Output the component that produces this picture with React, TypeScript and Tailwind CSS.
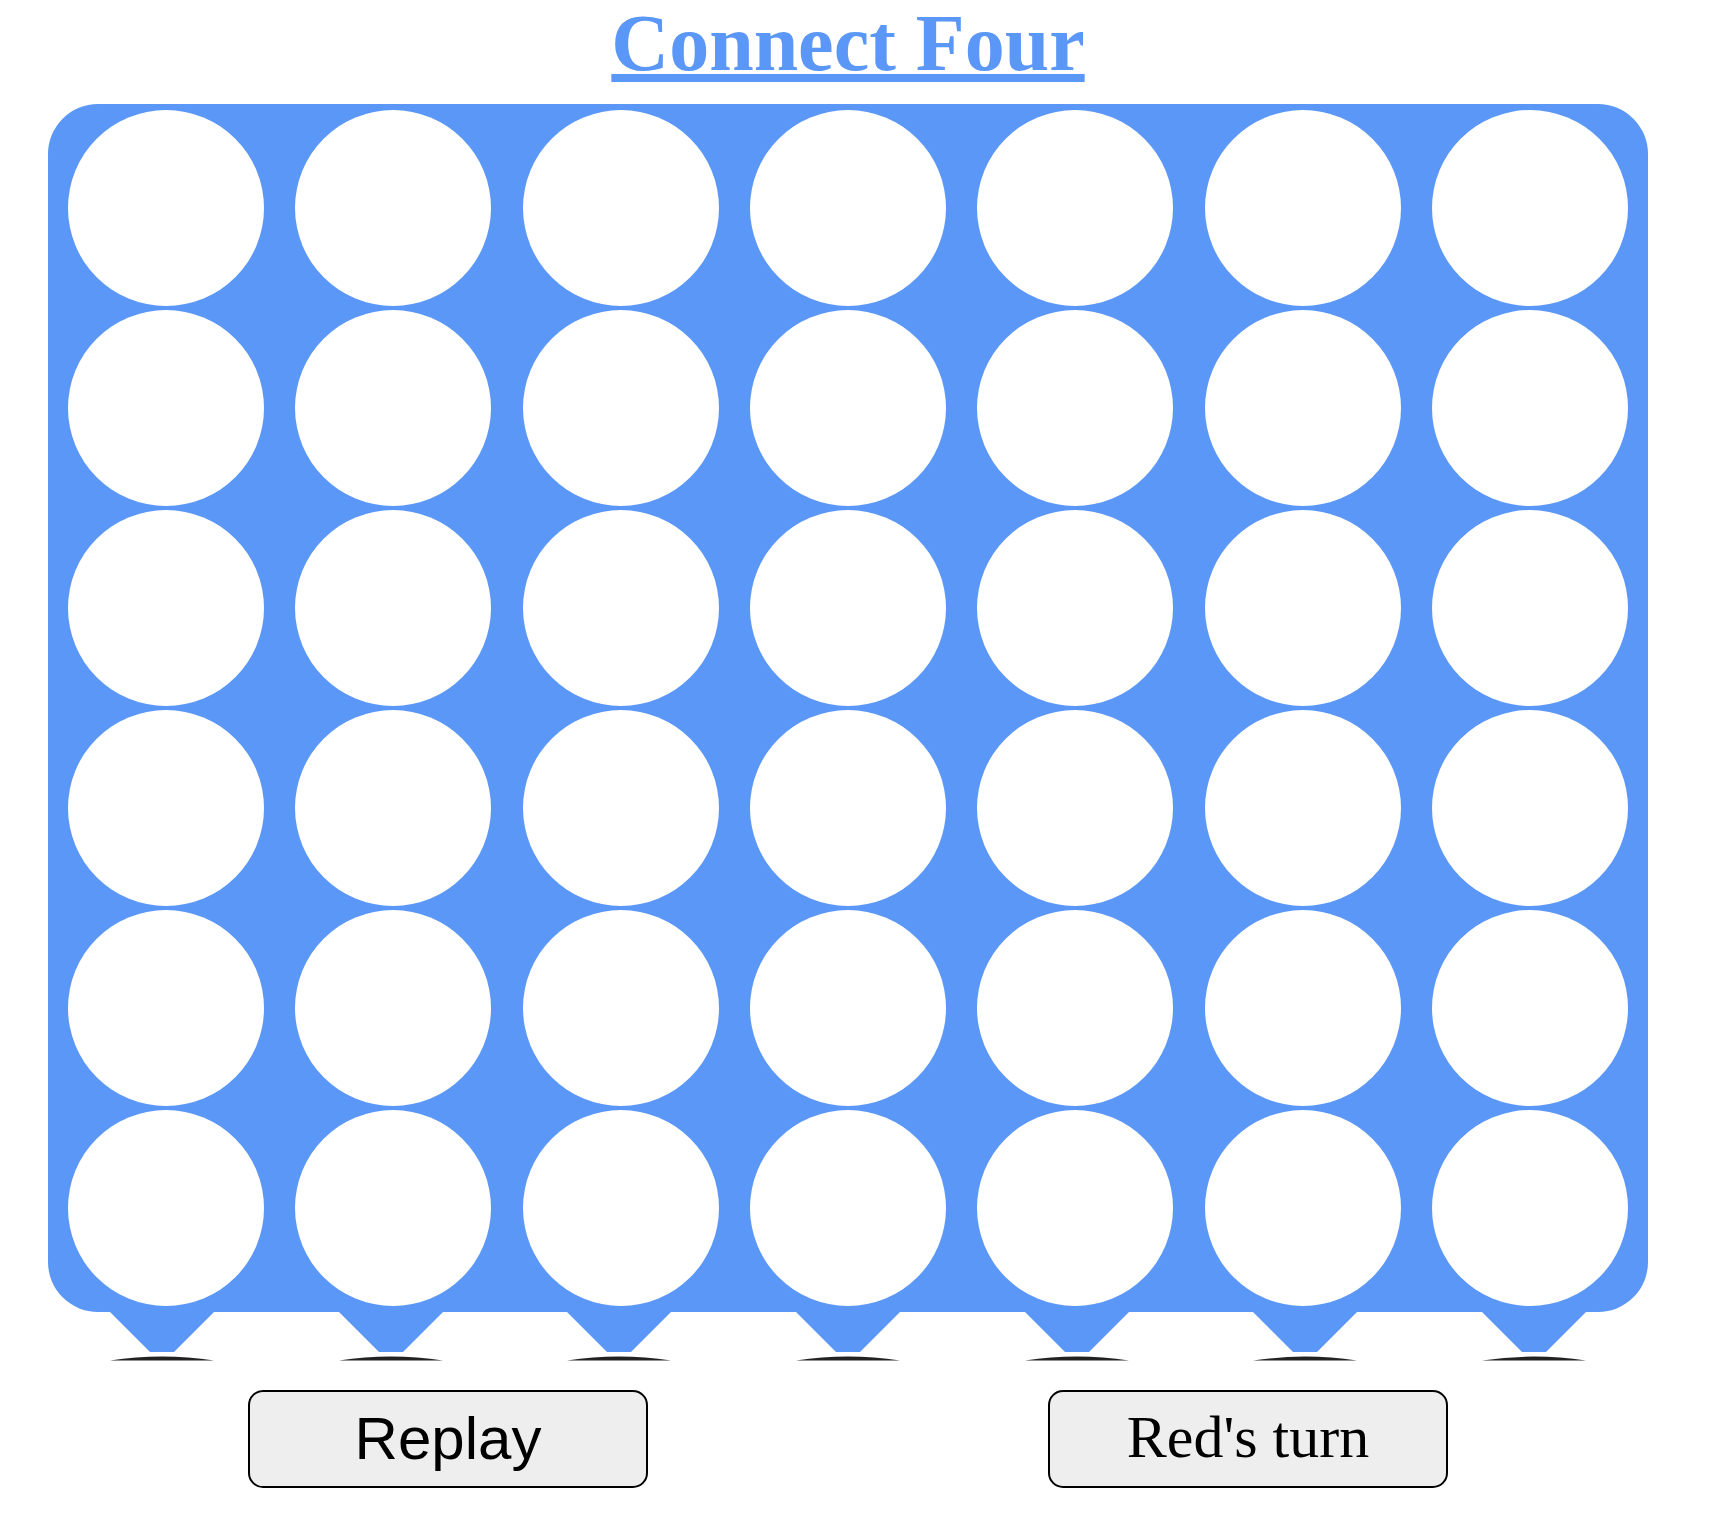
import React from 'react';

const ROWS = 6;
const COLS = 7;

function Leg() {
  return (
    <div className="flex flex-col items-center">
      <div className="h-[40px] w-[104px] border-t-[40px] border-x-[40px] border-x-transparent border-t-[#5b97f7]" />
      <svg width="104" height="5" viewBox="0 0 104 5" className="mt-[4px] block">
        <path d="M0 4.6 Q52 -3.4 104 4.6 Z" fill="#222222" />
      </svg>
    </div>
  );
}

export default function App() {
  return (
    <div className="w-[1726px] min-h-[1524px] bg-white">
      <div className="ml-[48px] flex h-[104px] w-[1600px] justify-center pt-[3px]">
        <h1
          className="text-[80px] font-bold leading-none text-[#5b97f7] underline decoration-[8px] underline-offset-[4px]"
          style={{ fontFamily: '"Liberation Serif", "Times New Roman", serif' }}
        >
          Connect Four
        </h1>
      </div>

      <div className="ml-[48px] w-[1600px]">
        <div className="flex flex-col gap-[4px] rounded-[50px] bg-[#5b97f7] px-[20px] py-[6px]">
          {[...Array(ROWS)].map((_, r) => (
            <div key={r} className="flex justify-between">
              {[...Array(COLS)].map((_, c) => (
                <div key={c} className="h-[196px] w-[196px] rounded-full bg-white" />
              ))}
            </div>
          ))}
        </div>

        <div className="grid grid-cols-7 justify-items-center">
          {[...Array(COLS)].map((_, c) => (
            <Leg key={c} />
          ))}
        </div>

        <div className="mt-[29px] flex justify-around">
          <button
            className="flex h-[98px] w-[400px] items-center justify-center rounded-[15px] border-2 border-black bg-[#eeeeee] text-[60px] leading-none text-black"
            style={{ fontFamily: '"Liberation Sans", Arial, sans-serif' }}
          >
            Replay
          </button>
          <button
            className="flex h-[98px] w-[400px] items-center justify-center rounded-[15px] border-2 border-black bg-[#eeeeee] pb-[4px] text-[60px] leading-none text-black"
            style={{ fontFamily: '"Liberation Serif", "Times New Roman", serif' }}
          >
            Red's turn
          </button>
        </div>
      </div>
    </div>
  );
}
